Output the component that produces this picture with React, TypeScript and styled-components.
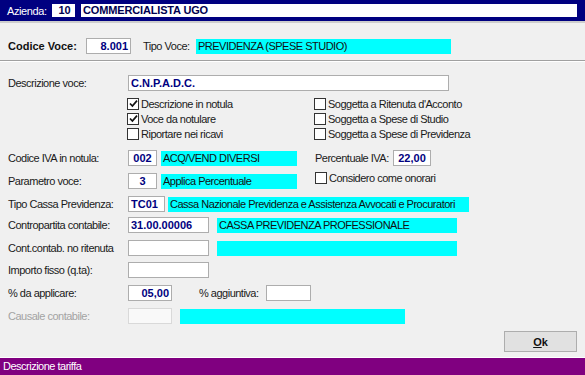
import React from "react";
import styled, {createGlobalStyle} from "styled-components";

const GlobalStyle = createGlobalStyle`
  * { box-sizing: border-box; }
  body {
    margin: 0;
    background: #f0f0f0;
    font-family: "Liberation Sans", Arial, sans-serif;
    font-size: 11px;
    color: #1a1a1a;
  }
`

const CHECKS_LEFT = [
    {text: "Descrizione in notula", on: true},
    {text: "Voce da notulare", on: true},
    {text: "Riportare nei ricavi", on: false},
]
const CHECKS_RIGHT = [
    "Soggetta a Ritenuta d'Acconto",
    "Soggetta a Spese di Studio",
    "Soggetta a Spese di Previdenza",
]

function Check({text, on}: { text: string, on?: boolean }) {
    return (
        <CheckRow>
            <CheckBox>
                {on && <svg width="9" height="9" viewBox="0 0 9 9">
                    <path d="M1 4.5 L3.4 7 L8 1.6" fill="none" stroke="#111" strokeWidth="1.7"/>
                </svg>}
            </CheckBox>
            <Text>{text}</Text>
        </CheckRow>
    )
}

export default function App() {
    return (
        <>
            <GlobalStyle/>
            <Window>
                <TopBar>
                    <BarLabel>Azienda:</BarLabel>
                    <BarBox $w={23} $center>10</BarBox>
                    <BarBox $grow>COMMERCIALISTA UGO</BarBox>
                </TopBar>

                <CodiceRow>
                    <BigLabel>Codice Voce:</BigLabel>
                    <Input $w={45} $align="right">8.001</Input>
                    <Text style={{marginLeft: 12, width: 53}}>Tipo Voce:</Text>
                    <Cyan $w={255}>PREVIDENZA (SPESE STUDIO)</Cyan>
                </CodiceRow>
                <Separator/>

                <Form>
                    <Row $mt={13}>
                        <Label>Descrizione voce:</Label>
                        <Input $w={321} $align="left">C.N.P.A.D.C.</Input>
                    </Row>
                    <Checks>
                        {CHECKS_LEFT.map((c, i) => (
                            <React.Fragment key={c.text}>
                                <Check text={c.text} on={c.on}/>
                                <Check text={CHECKS_RIGHT[i]}/>
                            </React.Fragment>
                        ))}
                    </Checks>
                    <Row $mt={9}>
                        <Label>Codice IVA in notula:</Label>
                        <Input $w={29}>002</Input>
                        <Cyan $w={136} $ml={4}>ACQ/VEND DIVERSI</Cyan>
                        <Text style={{marginLeft: 18, width: 78}}>Percentuale IVA:</Text>
                        <Input $w={38}>22,00</Input>
                    </Row>
                    <Row $mt={7}>
                        <Label>Parametro voce:</Label>
                        <Input $w={29}>3</Input>
                        <Cyan $w={136} $ml={4}>Applica Percentuale</Cyan>
                        <RightCheck>
                            <Check text="Considero come onorari"/>
                        </RightCheck>
                    </Row>
                    <Row $mt={7}>
                        <Label>Tipo Cassa Previdenza:</Label>
                        <Input $w={37} $align="left">TC01</Input>
                        <Cyan $w={301} $ml={3}>Cassa Nazionale Previdenza e Assistenza Avvocati e Procuratori</Cyan>
                    </Row>
                    <Row $mt={5}>
                        <Label>Contropartita contabile:</Label>
                        <Input $w={81} $align="left">31.00.00006</Input>
                        <Cyan $w={240} $ml={8}>CASSA PREVIDENZA PROFESSIONALE</Cyan>
                    </Row>
                    <Row $mt={7}>
                        <Label>Cont.contab. no ritenuta</Label>
                        <Input $w={81}/>
                        <Cyan $w={240} $ml={8}/>
                    </Row>
                    <Row $mt={6}>
                        <Label>Importo fisso (q.ta):</Label>
                        <Input $w={81}/>
                    </Row>
                    <Row $mt={7}>
                        <Label>% da applicare:</Label>
                        <Input $w={44} $align="right">05,00</Input>
                        <Text style={{marginLeft: 27, width: 67}}>% aggiuntiva:</Text>
                        <Input $w={45}/>
                    </Row>
                    <Row $mt={7}>
                        <Label $disabled>Causale contabile:</Label>
                        <Input $w={44} $disabled/>
                        <Cyan $w={225} $ml={8}/>
                    </Row>
                </Form>

                <ButtonRow>
                    <OkButton><u>O</u>k</OkButton>
                </ButtonRow>
                <StatusBar>Descrizione tariffa</StatusBar>
            </Window>
        </>
    )
}

const Window = styled.div`
  width: 585px;
  height: 375px;
  display: flex;
  flex-direction: column;
  background: #f0f0f0;
  overflow: hidden;
`
const TopBar = styled.div`
  height: 23px;
  display: flex;
  align-items: center;
  padding: 0 8px 0 7px;
  background: #000080;
  border-bottom: 2px solid #cdcdcd;
`
const BarLabel = styled.span`
  color: #fff;
  letter-spacing: -0.4px;
  width: 45px;
`
const BarBox = styled.div<{ $w?: number, $grow?: boolean, $center?: boolean }>`
  height: 13px;
  background: #fff;
  color: #000050;
  font-weight: 700;
  line-height: 13px;
  padding-left: 2px;
  margin-right: 6px;
  letter-spacing: -0.15px;
  text-align: ${p => p.$center ? "center" : "left"};
  ${p => p.$w ? `width: ${p.$w}px;` : ""}
  ${p => p.$grow ? "flex: 1; margin-right: 0;" : ""}
`
const CodiceRow = styled.div`
  display: flex;
  align-items: center;
  height: 16px;
  margin-top: 15px;
  padding-left: 8px;
`
const BigLabel = styled.span`
  font-weight: 700;
  width: 78px;
  color: #111;
`
const Text = styled.span`
  letter-spacing: -0.5px;
  white-space: nowrap;
`
const Separator = styled.div`
  margin-top: 6px;
  height: 2px;
  border-top: 1px solid #a0a0a0;
  border-bottom: 1px solid #fff;
`
const Form = styled.div`
  display: flex;
  flex-direction: column;
  padding-left: 8px;
`
const Row = styled.div<{ $mt: number }>`
  display: flex;
  align-items: center;
  height: 16px;
  margin-top: ${p => p.$mt}px;
`
const Label = styled.span<{ $disabled?: boolean }>`
  width: 120px;
  letter-spacing: -0.5px;
  white-space: nowrap;
  color: ${p => p.$disabled ? "#a3a3a3" : "#1a1a1a"};
`
const Input = styled.div<{ $w: number, $align?: string, $disabled?: boolean }>`
  width: ${p => p.$w}px;
  height: 16px;
  flex-shrink: 0;
  background: ${p => p.$disabled ? "#f9f9f9" : "#fff"};
  border: 1px solid ${p => p.$disabled ? "#d9d9d9" : "#adadad"};
  color: #000080;
  font-weight: 700;
  line-height: 14px;
  padding: 0 2px;
  text-align: ${p => p.$align || "center"};
  white-space: nowrap;
  overflow: hidden;
`
const Cyan = styled.div<{ $w: number, $ml?: number }>`
  width: ${p => p.$w}px;
  height: 15px;
  flex-shrink: 0;
  margin-left: ${p => p.$ml || 0}px;
  background: #00ffff;
  color: #111;
  line-height: 15px;
  padding-left: 2px;
  letter-spacing: -0.5px;
  white-space: nowrap;
  overflow: hidden;
`
const Checks = styled.div`
  display: grid;
  grid-template-columns: 187px 1fr;
  grid-auto-rows: 15px;
  margin-top: 5px;
  padding-left: 119px;
`
const CheckRow = styled.label`
  display: flex;
  align-items: center;
`
const CheckBox = styled.span`
  width: 12px;
  height: 12px;
  margin-right: 2px;
  border: 1px solid #333;
  background: #fff;
  display: flex;
  align-items: center;
  justify-content: center;
`
const RightCheck = styled.div`
  margin-left: 18px;
  margin-top: -6px;
`
const ButtonRow = styled.div`
  display: flex;
  justify-content: flex-end;
  padding-right: 8px;
  margin-top: 7px;
`
const OkButton = styled.button`
  width: 73px;
  height: 21px;
  background: #e1e1e1;
  border: 1px solid #adadad;
  font-family: "Liberation Sans", Arial, sans-serif;
  font-size: 11px;
  font-weight: 700;
  color: #111;
  padding: 0;
`
const StatusBar = styled.div`
  margin-top: auto;
  height: 18px;
  border-top: 1px solid #fff;
  background: #800080;
  color: #fff;
  line-height: 16px;
  padding-left: 3px;
  letter-spacing: -0.5px;
`
